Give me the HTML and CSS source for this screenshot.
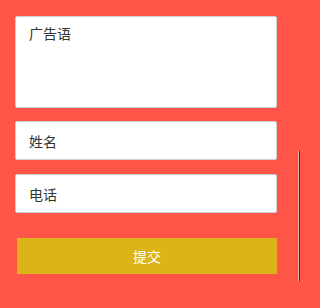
FILE: index.html
```html
<!DOCTYPE html>
<html lang="zh">
<head>
<meta charset="utf-8">
<link rel="stylesheet" href="styles.css">
</head>
<body>
<form class="form">
  <div class="field field-area">广告语</div>
  <div class="field">姓名</div>
  <div class="field">电话</div>
  <button type="button" class="submit">提交</button>
</form>
<div class="edge"></div>
</body>
</html>
```
FILE: styles.css
```css
html, body {
  margin: 0;
  padding: 0;
  width: 300px;
  height: 308px;
  overflow: hidden;
  background: #ff5548;
  font-family: "Noto Sans CJK SC", "Noto Sans", sans-serif;
}
.form {
  display: flex;
  flex-direction: column;
  padding: 16px 23px 0 15px;
}
.field {
  box-sizing: border-box;
  height: 39px;
  background: #fff;
  border: 1px solid #c9ced8;
  border-radius: 2px;
  padding: 0 13px;
  display: flex;
  align-items: center;
  font-size: 14px;
  color: #333;
  margin-bottom: 14px;
}
.field-area {
  height: 92px;
  align-items: flex-start;
  padding-top: 6px;
  margin-bottom: 13px;
}
.submit {
  margin: 11px 0 0 2px;
  height: 36px;
  border: 0;
  background: #dcb418;
  color: #fff;
  font-family: inherit;
  font-size: 14px;
  padding: 0;
}
.edge {
  position: absolute;
  left: 298px;
  top: 151px;
  width: 1px;
  height: 130px;
  background: #e9b4b0;
  border-right: 1px solid #5a2222;
}
```
